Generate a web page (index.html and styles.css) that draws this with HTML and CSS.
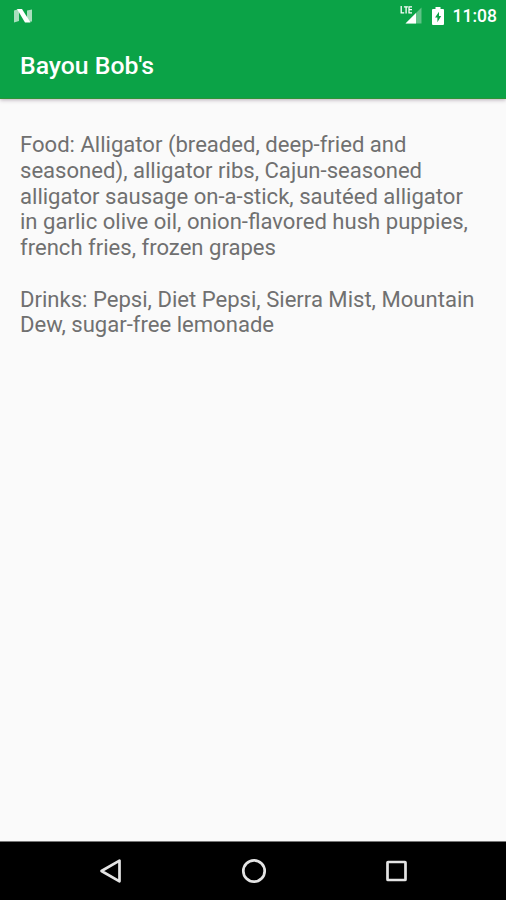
FILE: index.html
```html
<!DOCTYPE html>
<html lang="en">
<head>
    <meta charset="UTF-8">
    <meta name="viewport" content="width=device-width, initial-scale=1.0">
    <title>Bayou Bob's</title>
    <link rel="stylesheet" href="styles.css">
</head>
<body>
    <header class="header">
        <div class="status-bar">
            <svg class="icon-n" width="20" height="16" viewBox="0 0 20 16">
                <path d="M1 2.500L6 1v12L1 14.500zM14 2.500L19 1.500v12L14 14z" fill="#fff" fill-opacity=".65"/>
                <path d="M4 1h5L17.500 14.500h-5.500z" fill="#fff"/>
            </svg>
            <div class="status-right">
                <svg class="icon-signal" width="22" height="19" viewBox="0 0 22 19">
                    <path d="M21.500 1.500v16h-16z" fill="#fff" fill-opacity=".35"/>
                    <path d="M16 7v10.500H5.500z" fill="#fff"/>
                    <path d="M0 0h13v8H0z" fill="#0ba347"/>
                    <path d="M1.200 0v6.900h3M3.900.8h4M6.100.8v6.700M12 .8H9v6.100H12M9 3.700H12" fill="none" stroke="#fff" stroke-width="1.300"/>
                </svg>
                <svg class="icon-battery" width="12" height="18" viewBox="0 0 12 18">
                    <path d="M3.500 0h5v2H11q1 0 1 1v14q0 1-1 1H1q-1 0-1-1V3q0-1 1-1h2.500z" fill="#fff"/>
                    <path d="M7 4.800L3 10.600h2.400v4.600L9.200 9H7z" fill="#0ba347"/>
                </svg>
                <span class="clock">11:08</span>
            </div>
        </div>
        <h1>Bayou Bob's</h1>
    </header>

    <main class="content">
        <p>Food: Alligator (breaded, deep-fried and<br>
        seasoned), alligator ribs, Cajun-seasoned<br>
        alligator sausage on-a-stick, sautéed alligator<br>
        in garlic olive oil, onion-flavored hush puppies,<br>
        french fries, frozen grapes</p>
        <p>Drinks: Pepsi, Diet Pepsi, Sierra Mist, Mountain<br>
        Dew, sugar-free lemonade</p>
    </main>

    <nav class="nav-bar">
        <svg width="26" height="26" viewBox="0 0 26 26">
            <path d="M21.500 2.700v20.600L3.500 13z"/>
        </svg>
        <svg width="26" height="26" viewBox="0 0 26 26">
            <circle cx="13" cy="13" r="10.700"/>
        </svg>
        <svg width="26" height="26" viewBox="0 0 26 26">
            <rect x="3.500" y="4" width="18" height="18" rx=".5"/>
        </svg>
    </nav>
</body>
</html>
```
FILE: styles.css
```css
* {
    box-sizing: border-box;
}
body {
    font-family: Roboto, sans-serif;
    background-color: #fafafa;
    margin: 0;
    height: 900px;
    display: flex;
    flex-direction: column;
    overflow: hidden;
}
.header {
    background-color: #0ba347;
    color: white;
    height: 99px;
    border-bottom: 1px solid #2c9436;
    box-shadow: 0 1px 4px rgba(60, 30, 60, 0.35);
}
.status-bar {
    height: 32px;
    padding: 0 9px 0 13px;
    display: flex;
    justify-content: space-between;
    align-items: center;
}
.status-right {
    display: flex;
    align-items: center;
}
.icon-signal {
    margin-right: 10px;
    margin-bottom: 2px;
}
.icon-battery {
    margin-right: 9px;
    margin-bottom: 1px;
}
.clock {
    font-size: 17.5px;
    font-weight: 500;
    line-height: 32px;
}
h1 {
    font-size: 24.8px;
    font-weight: 500;
    line-height: 32px;
    margin: 18px 0 0 20px;
}
.content {
    flex: 1;
    padding: 33px 20px 0;
}
p {
    color: #707070;
    font-size: 22.08px;
    line-height: 25.75px;
    white-space: nowrap;
    margin: 0 0 25.75px;
}
.nav-bar {
    background-color: black;
    height: 59px;
    border-top: 1px solid #777;
    padding: 0 96px 0 98px;
    display: flex;
    justify-content: space-between;
    align-items: center;
}
.nav-bar svg {
    fill: none;
    stroke: #e4e4e4;
    stroke-width: 2.7;
    stroke-linejoin: round;
}
```
